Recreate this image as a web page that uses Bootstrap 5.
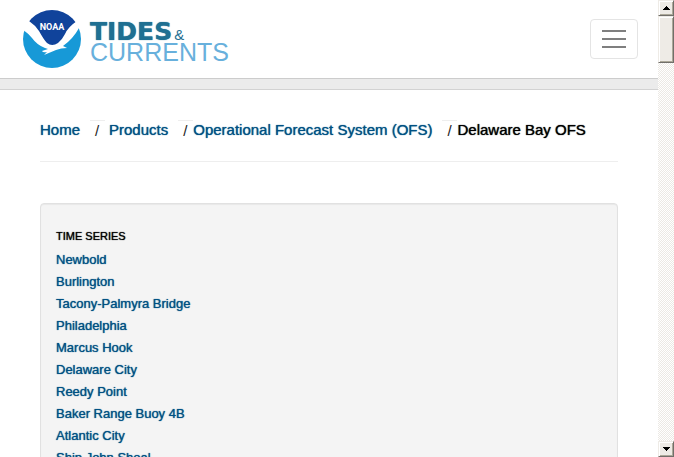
<!DOCTYPE html>
<html lang="en">
<head>
<meta charset="utf-8">
<meta name="viewport" content="width=device-width, initial-scale=1">
<title>Delaware Bay OFS - NOAA Tides &amp; Currents</title>
<link href="https://cdn.jsdelivr.net/npm/bootstrap@5.3.0/dist/css/bootstrap.min.css" rel="stylesheet">
<style>
body { font-family: "Liberation Sans", Arial, sans-serif; color: #000; background: #fff; }
a { color: #005183; text-decoration: none; }
.site-header { height: 79px; padding: 0 20px 0 22px; border-bottom: 1px solid #ccc; }
.strip { height: 11px; background: #ebebeb; border-bottom: 1px solid #d2d2d2; }
.brand-words { line-height: 20px; font-size: 25px; padding-top: 6px; margin-left: 8px; }
.brand-tides { font-family: "DejaVu Sans", sans-serif; font-weight: 700; color: #1f7092; text-shadow: 0 0 1px currentColor; }
.brand-amp { font-size: 15px; line-height: 10px; margin-left: 2px; color: #1f7092; }
.brand-currents { color: #68b0dc; }
.menu-btn { width: 48px; height: 40px; border: 1px solid #e4e4e4; border-radius: 4px; }
.menu-btn svg { display: block; margin: auto; }
.content { padding: 30px 40px 0; }
.trail { font-size: 15px; line-height: 20px; padding-bottom: 20px; border-bottom: 1px solid #eee; text-shadow: 0 0 1px currentColor; }
.trail-sep { width: 15px; margin-left: 10px; padding-left: 5px; border-top: 1px solid #eee; color: #222; text-shadow: none; }
.station-panel { margin-top: 41px; padding: 21px 15px; min-height: 300px; background: #f4f4f4; border: 1px solid #e1e1e1; border-radius: 4px; box-shadow: inset 0 1px 1px rgba(0,0,0,.05); }
.station-panel h2 { font-size: 11px; line-height: 22px; margin: 0 0 2px; font-weight: 400; text-shadow: 0 0 1px currentColor; }
.station-list { font-size: 13px; line-height: 22px; text-shadow: 0 0 1px currentColor; }
.scroll-rail { width: 16px; background: repeating-conic-gradient(#ece9e4 0 25%, #fff 0 50%) 0 0 / 2px 2px; }
.rail-part { background: #eeebe6; border: 1px solid; border-color: #eeebe6 #716f6a #716f6a #eeebe6; box-shadow: inset 1px 1px #fff, inset -1px -1px #aca899; border-radius: 0; }
.rail-btn { height: 16px; }
.rail-thumb { height: 47px; }
</style>
<script src="https://cdn.jsdelivr.net/npm/bootstrap@5.3.0/dist/js/bootstrap.bundle.min.js"></script>
</head>
<body class="d-flex vh-100 overflow-hidden">
<div class="flex-grow-1 overflow-hidden">
  <header class="site-header d-flex align-items-center justify-content-between">
    <a href="#" class="d-flex align-items-center" aria-label="NOAA Tides and Currents">
      <svg width="60" height="60" viewBox="0 0 60 60" aria-hidden="true">
        <defs><clipPath id="disc"><circle cx="30" cy="30" r="29"/></clipPath></defs>
        <g clip-path="url(#disc)">
          <path fill="#fff" d="M0 0h60v60H0z"/>
          <path fill="#10439b" d="M7 12Q13 16 17 22Q22 31 25 34Q30 38 36 34Q40 31 43 25Q46 18 55 12V0H5z"/>
          <path fill="#1799d7" d="M0 20Q6 24 10 29Q15 36 23 39L26 40L20 42Q21 44 25 43L22 46L34 41Q39 39 45 39L41 37Q51 30 57 19H60V60H0z"/>
        </g>
        <text x="30" y="21" text-anchor="middle" font-family="Roboto, sans-serif" font-weight="700" font-size="9" fill="#fff">NOAA</text>
      </svg>
      <span class="brand-words d-flex flex-column">
        <span class="d-flex align-items-baseline"><span class="brand-tides">TIDES</span><span class="brand-amp">&amp;</span></span>
        <span class="brand-currents">CURRENTS</span>
      </span>
    </a>
    <button type="button" class="menu-btn bg-white p-0" aria-label="Toggle navigation">
      <svg width="24" height="18" viewBox="0 0 24 18" aria-hidden="true"><path fill="#7f7f7f" d="M0 0h24v2H0zM0 8h24v2H0zM0 16h24v2H0z"/></svg>
    </button>
  </header>
  <div class="strip"></div>
  <main class="content">
    <nav class="trail d-flex" aria-label="Breadcrumb">
      <a href="#">Home</a><span class="trail-sep me-1">/</span>
      <a href="#">Products</a><span class="trail-sep">/</span>
      <a href="#">Operational Forecast System (OFS)</a><span class="trail-sep">/</span>
      <span aria-current="page">Delaware Bay OFS</span>
    </nav>
    <section class="station-panel">
      <h2>TIME SERIES</h2>
      <ul class="station-list list-unstyled mb-0">
        <li><a href="#">Newbold</a></li>
        <li><a href="#">Burlington</a></li>
        <li><a href="#">Tacony-Palmyra Bridge</a></li>
        <li><a href="#">Philadelphia</a></li>
        <li><a href="#">Marcus Hook</a></li>
        <li><a href="#">Delaware City</a></li>
        <li><a href="#">Reedy Point</a></li>
        <li><a href="#">Baker Range Buoy 4B</a></li>
        <li><a href="#">Atlantic City</a></li>
        <li><a href="#">Ship John Shoal</a></li>
      </ul>
    </section>
  </main>
</div>
<div class="scroll-rail d-flex flex-column flex-shrink-0">
  <button type="button" class="rail-part rail-btn p-0 d-flex align-items-center justify-content-center" aria-label="Scroll up"><svg width="7" height="4" shape-rendering="crispEdges"><path d="M3 0h1v1h1v1h1v1h1v1H0V3h1V2h1V1h1z"/></svg></button>
  <div class="rail-part rail-thumb"></div>
  <button type="button" class="rail-part rail-btn p-0 mt-auto d-flex align-items-center justify-content-center" aria-label="Scroll down"><svg width="7" height="4" shape-rendering="crispEdges"><path d="M0 0h7v1H6v1H5v1H4v1H3V3H2V2H1V1H0z"/></svg></button>
</div>
</body>
</html>
